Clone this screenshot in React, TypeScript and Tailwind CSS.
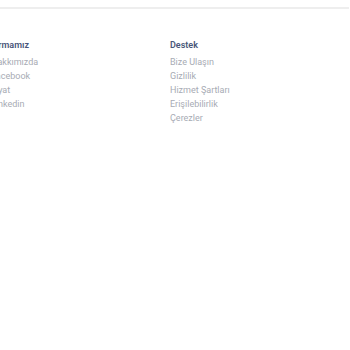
import React from "react";

const cols = [
  { title: "Firmamız", links: ["Hakkımızda", "Facebook", "Fiyat", "Linkedin"] },
  { title: "Destek", links: ["Bize Ulaşın", "Gizlilik", "Hizmet Şartları", "Erişilebilirlik", "Çerezler"] },
];

export default function App() {
  return (
    <div className="w-[350px] h-[350px] overflow-hidden bg-white" style={{ fontFamily: "Roboto, 'Noto Sans', sans-serif" }}>
      <div className="pt-[7px]">
        <div className="h-[2px] bg-[#eeeeee] mr-[1px]" />
      </div>
      <div className="flex -ml-[9px] pt-[29px]">
        {cols.map((c) => (
          <div key={c.title} className="w-[179px] flex flex-col">
            <div className="text-[9px] font-semibold text-[#485679] leading-[14px]">{c.title}</div>
            <div className="mt-[3px] flex flex-col">
              {c.links.map((l) => (
                <div key={l} className="text-[9px] text-[#a7abb4] leading-[14px]">{l}</div>
              ))}
            </div>
          </div>
        ))}
      </div>
    </div>
  );
}
